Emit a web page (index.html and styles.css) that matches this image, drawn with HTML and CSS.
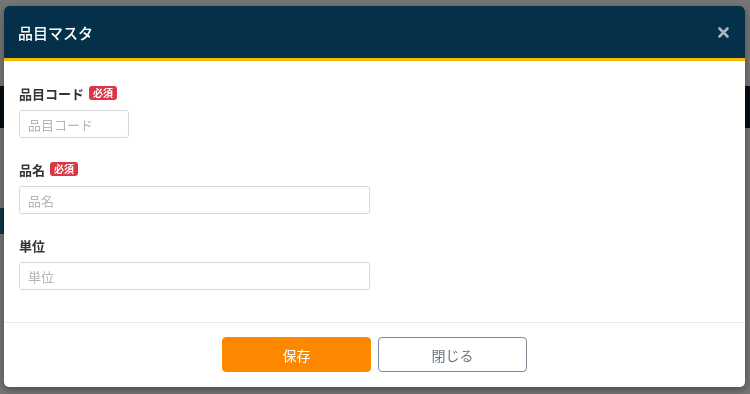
FILE: index.html
```html
<!DOCTYPE html>
<html lang="ja">
<head>
    <meta charset="UTF-8">
    <meta name="viewport" content="width=device-width, initial-scale=1.0">
    <title>品目マスタ</title>
    <link rel="stylesheet" href="styles.css">
</head>
<body>
    <!-- page under the backdrop -->
    <div class="page">
        <div class="page-top"></div>
        <div class="page-nav"></div>
        <div class="page-rest">
            <div class="page-tag"></div>
        </div>
    </div>

    <div class="backdrop"></div>

    <div class="modal">
        <div class="modal-header">
            <h2 class="modal-title">品目マスタ</h2>
            <button class="close" type="button">
                <svg width="11" height="11" viewBox="0 0 11 11">
                    <path d="M1.5 1.5 L9.5 9.5 M9.5 1.5 L1.5 9.5" stroke="#a6b6c3" stroke-width="2.6" stroke-linecap="round"/>
                </svg>
            </button>
        </div>

        <div class="modal-body">
            <div class="form-group">
                <label class="label">品目コード<span class="badge">必須</span></label>
                <input type="text" class="input input-short" placeholder="品目コード">
            </div>
            <div class="form-group">
                <label class="label">品名<span class="badge">必須</span></label>
                <input type="text" class="input" placeholder="品名">
            </div>
            <div class="form-group">
                <label class="label">単位</label>
                <input type="text" class="input" placeholder="単位">
            </div>
        </div>

        <div class="modal-footer">
            <button class="btn btn-save" type="button">保存</button>
            <button class="btn btn-close" type="button">閉じる</button>
        </div>
    </div>
</body>
</html>
```

FILE: styles.css
```css
* {
    box-sizing: border-box;
}
body {
    margin: 0;
    font-family: "Noto Sans CJK JP", "Noto Sans", sans-serif;
    color: #333;
    background: #fff;
    height: 394px;
    overflow: hidden;
}
.page {
    height: 394px;
}
.page-top {
    height: 86px;
    background: #f4f4f4;
}
.page-nav {
    height: 42px;
    background: #0b1c2a;
}
.page-rest {
    height: 266px;
    padding-top: 80px;
    background: #f2f2f2;
}
.page-tag {
    width: 8px;
    height: 26px;
    background: #1d6e86;
}
.backdrop {
    position: fixed;
    inset: 0;
    background: rgba(0, 0, 0, 0.52);
}
.modal {
    position: fixed;
    top: 6px;
    left: 4px;
    width: 741px;
    background: #fff;
    border-radius: 5px;
    overflow: hidden;
    box-shadow: 0 3px 8px rgba(0, 0, 0, 0.35);
}
.modal-header {
    height: 55px;
    background: #05304a;
    border-bottom: 3px solid #f6b900;
    display: flex;
    align-items: center;
    justify-content: space-between;
    padding: 0 16px 0 14px;
}
.modal-title {
    margin: 0;
    font-size: 15px;
    font-weight: 500;
    color: #fff;
}
.close {
    border: none;
    background: none;
    padding: 0;
    display: flex;
    cursor: pointer;
}
.modal-body {
    padding: 22px 15px 32px;
}
.form-group {
    margin-bottom: 21px;
}
.form-group:last-child {
    margin-bottom: 0;
}
.label {
    display: flex;
    align-items: center;
    height: 20px;
    margin-bottom: 7px;
    font-size: 13px;
    font-weight: bold;
    color: #333;
}
.badge {
    display: inline-block;
    margin-left: 5px;
    padding: 0 4px;
    height: 14px;
    line-height: 14px;
    font-size: 10px;
    font-weight: bold;
    color: #fff;
    background: #dc3545;
    border-radius: 3px;
}
.input {
    display: block;
    width: 351px;
    height: 28px;
    padding: 0 8px;
    border: 1px solid #d3d8de;
    border-radius: 3px;
    font-family: inherit;
    font-size: 13px;
    color: #333;
}
.input::placeholder {
    color: #b5b5b5;
}
.input-short {
    width: 110px;
}
.modal-footer {
    border-top: 1px solid #e9ecef;
    padding: 14px 0 15px;
    display: flex;
    justify-content: center;
    gap: 7px;
}
.btn {
    width: 149px;
    height: 35px;
    border-radius: 4px;
    font-family: inherit;
    font-size: 14px;
    cursor: pointer;
}
.btn-save {
    background: #fd8800;
    border: 1px solid #fd8800;
    color: #fff;
}
.btn-close {
    background: #fff;
    border: 1px solid #7f8a95;
    color: #6c757d;
}
```
